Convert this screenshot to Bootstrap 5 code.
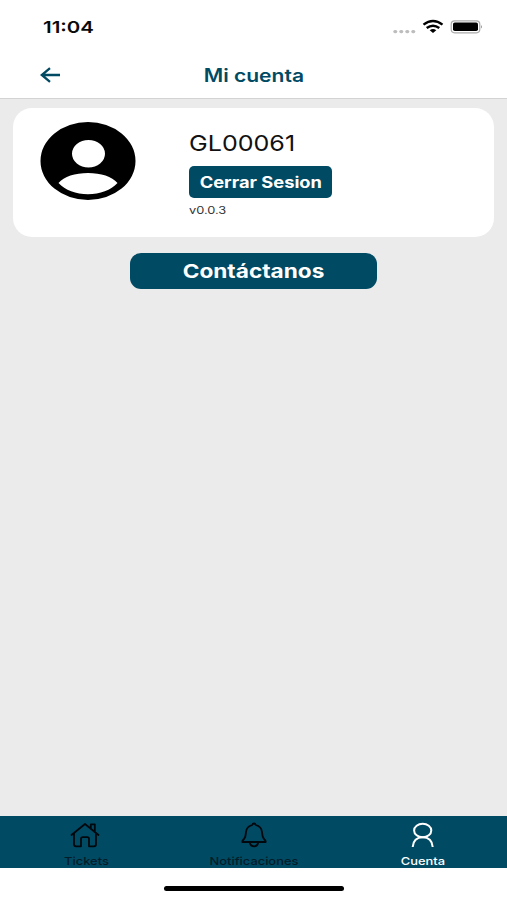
<!DOCTYPE html>
<html lang="es">
<head>
<meta charset="utf-8">
<meta name="viewport" content="width=device-width, initial-scale=1">
<title>Mi cuenta</title>
<link href="https://cdn.jsdelivr.net/npm/bootstrap@5.3.0/dist/css/bootstrap.min.css" rel="stylesheet">
<style>
:root { --brand: #004a64; }
body { font-family: Inter, "Liberation Sans", sans-serif; background: #ebebeb; color: #111; height: 900px; overflow: hidden; }
.wide { display: inline-block; white-space: nowrap; line-height: 1; transform: scaleX(var(--sx, 1)); }
.wide-start { transform-origin: left center; }
.status-bar { height: 50px; padding: 19px 24px 0 42.5px; }
.clock { font-size: 16.5px; font-weight: 600; color: #0a0a0a; --sx: 1.24; }
.title-bar { height: 49px; border-bottom: 1px solid #d3d3d3; color: var(--brand); }
.title-bar .back-link { padding: 0 0 4px 40px; line-height: 0; color: var(--brand); }
.title-bar .title-cell { padding-top: 3px; }
.title-text { font-size: 18px; font-weight: 600; --sx: 1.17; }
.account-card { margin: 9px 13px 0; height: 129px; border-radius: 19px; padding: 14px 27px; }
.account-info { margin-left: 53px; padding-top: 10px; }
.user-code { font-size: 22px; --sx: 1.14; }
.btn-brand { --bs-btn-bg: var(--brand); --bs-btn-color: #fff; --bs-btn-hover-bg: #003b50; --bs-btn-hover-color: #fff; --bs-btn-border-width: 0; font-weight: 700; padding: 0; }
.btn-logout { width: 143px; height: 32px; border-radius: 5px; font-size: 15.5px; margin-top: 12px; padding-top: 1px; --sx: 1.18; }
.version { font-size: 10.3px; color: #333; margin-top: 7px; --sx: 1.24; }
.btn-contact { width: 247px; height: 36px; border-radius: 11px; font-size: 19px; margin-top: 16px; padding-top: 3px; --sx: 1.19; }
.tab-bar { background: var(--brand); height: 52px; }
.tab-item { color: #021c28; padding-top: 6px; }
.tab-item svg { color: #00080d; }
.tab-item.current, .tab-item.current svg { color: #fff; }
.tab-label { font-size: 11px; font-weight: 500; margin-top: 8px; --sx: 1.17; }
.home-area { height: 32px; padding-top: 18px; }
.home-indicator { width: 180px; height: 5px; border-radius: 3px; background: #000; }
</style>
</head>
<body class="d-flex flex-column">
<header class="bg-white">
  <div class="status-bar d-flex justify-content-between align-items-start">
    <span class="wide wide-start clock">11:04</span>
    <svg width="90" height="16" viewBox="0 0 90 16">
      <g fill="#bdbdbd"><rect x="0.3" y="11" width="4" height="3.2" rx="1.6"/><rect x="6.3" y="11" width="4" height="3.2" rx="1.6"/><rect x="12.3" y="11" width="4" height="3.2" rx="1.6"/><rect x="18.3" y="11" width="4" height="3.2" rx="1.6"/></g>
      <g fill="none" stroke="#000" stroke-width="2.4"><path d="M30.5 5.6Q40 -1.6 49.5 5.6"/><path d="M33.7 9Q40 4.3 46.3 9"/></g>
      <path d="M36.7 11.2Q40 9 43.3 11.2L40 14Z"/>
      <rect x="58.2" y="1.8" width="28.6" height="12" rx="3.5" fill="#fff" stroke="#aaa" stroke-width="1.2"/>
      <rect x="60" y="3.5" width="25" height="8.6" rx="1.8"/>
      <path d="M88 6q2 1.8 0 3.6z" fill="#999"/>
    </svg>
  </div>
  <nav class="title-bar row g-0 align-items-center">
    <div class="col-3"><a href="#" class="back-link d-inline-block" aria-label="Volver"><svg width="20" height="16" viewBox="0 0 20 16" fill="none" stroke="currentColor" stroke-width="2.3"><path d="M20 8H2M10 1.2L1.8 8L10 14.8"/></svg></a></div>
    <div class="col-6 text-center title-cell"><span class="wide title-text">Mi cuenta</span></div>
  </nav>
</header>
<main class="flex-grow-1 d-flex flex-column">
  <section class="account-card bg-white d-flex align-items-start">
    <svg width="96" height="78" viewBox="0 0 96 78"><path fill-rule="evenodd" d="M48 0a47.5 39 0 1 1 0 78a47.5 39 0 1 1 0-78ZM48.5 18a16.5 13.7 0 1 0 0 27.4a16.5 13.7 0 1 0 0-27.4ZM18.5 61C24 54.5 35 51 48 51S72 54.5 77.5 61C71 68 60 72.3 48 72.3S25 68 18.5 61Z"/></svg>
    <div class="account-info d-flex flex-column align-items-start">
      <span class="wide wide-start user-code">GL00061</span>
      <button type="button" class="btn btn-brand btn-logout"><span class="wide">Cerrar Sesion</span></button>
      <span class="wide wide-start version">v0.0.3</span>
    </div>
  </section>
  <button type="button" class="btn btn-brand btn-contact mx-auto"><span class="wide">Contáctanos</span></button>
</main>
<nav class="tab-bar row g-0 text-center">
  <div class="col tab-item d-flex flex-column align-items-center">
    <svg width="30" height="26" viewBox="0 0 30 26" fill="none" stroke="currentColor" stroke-width="1.8" stroke-linejoin="round" stroke-linecap="round"><path d="M1.5 13L15 2L28.5 13M4 11V22.3Q4 24.3 6 24.3H11V17Q11 15.2 12.8 15.2H17.2Q19 15.2 19 17V24.3H24Q26 24.3 26 22.3V11M20.8 6V2.3H24.8V9.7"/></svg>
    <span class="wide tab-label ps-1">Tickets</span>
  </div>
  <div class="col tab-item d-flex flex-column align-items-center">
    <svg width="30" height="26" viewBox="0 0 30 26" fill="none" stroke="currentColor" stroke-width="1.8" stroke-linejoin="round" stroke-linecap="round"><path d="M15 1.5Q13.5 1.5 13.3 3Q7.5 4.5 7 10Q6.7 15 5 17Q3 19 3.3 20H26.7Q27 19 25 17Q23.3 15 23 10Q22.5 4.5 16.7 3Q16.5 1.5 15 1.5ZM10.8 20.5Q11.5 24.3 15 24.3T19.2 20.5"/></svg>
    <span class="wide tab-label">Notificaciones</span>
  </div>
  <div class="col tab-item current d-flex flex-column align-items-center">
    <svg width="30" height="26" viewBox="0 0 30 26" fill="none" stroke="currentColor" stroke-width="2"><ellipse cx="14.7" cy="8.5" rx="8.6" ry="6.8"/><path d="M4.7 25Q5.5 15.3 14.7 15.3T24.7 25"/></svg>
    <span class="wide tab-label">Cuenta</span>
  </div>
</nav>
<footer class="home-area bg-white"><div class="home-indicator mx-auto"></div></footer>
<script src="https://cdn.jsdelivr.net/npm/bootstrap@5.3.0/dist/js/bootstrap.bundle.min.js"></script>
</body>
</html>
